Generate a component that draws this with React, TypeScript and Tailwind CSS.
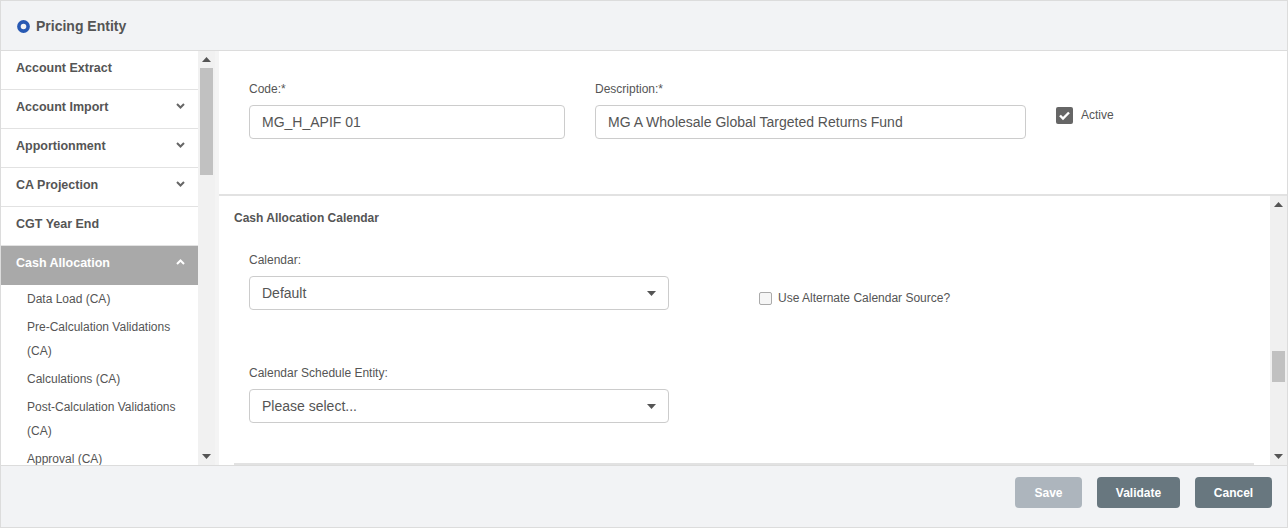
import React from "react";

const Chevron = ({ up = false, color = "#666" }: { up?: boolean; color?: string }) => (
  <svg width="9" height="6" viewBox="0 0 9 6" className="block">
    <path
      d={up ? "M1 5 L4.5 1.5 L8 5" : "M1 1 L4.5 4.5 L8 1"}
      fill="none"
      stroke={color}
      strokeWidth="2"
    />
  </svg>
);

const Caret = ({ up = false, color = "#555" }: { up?: boolean; color?: string }) => (
  <svg width="9" height="5" viewBox="0 0 9 5" className="block">
    <path d={up ? "M0 5 L4.5 0 L9 5 Z" : "M0 0 L9 0 L4.5 5 Z"} fill={color} />
  </svg>
);

const navItems = [
  { label: "Account Extract", chevron: false },
  { label: "Account Import", chevron: true },
  { label: "Apportionment", chevron: true },
  { label: "CA Projection", chevron: true },
  { label: "CGT Year End", chevron: false },
];

const subItems = [
  "Data Load (CA)",
  "Pre-Calculation Validations (CA)",
  "Calculations (CA)",
  "Post-Calculation Validations (CA)",
  "Approval (CA)",
];

export default function App() {
  return (
    <div
      className="w-[1288px] h-[528px] border border-[#dcdcdc] flex flex-col bg-white overflow-hidden"
      style={{ fontFamily: '"Liberation Sans", Arial, sans-serif' }}
    >
      {/* Header */}
      <div className="h-[50px] shrink-0 bg-[#f2f3f5] border-b border-[#dcdcdc] flex items-center pl-[16px] pt-[1px]">
        <svg width="13" height="13" viewBox="0 0 13 13" className="mr-[6px]">
          <circle cx="6.5" cy="6.5" r="4.6" fill="none" stroke="#2859b3" strokeWidth="3.6" />
        </svg>
        <span className="text-[14px] font-bold text-[#555] leading-none">Pricing Entity</span>
      </div>

      {/* Body */}
      <div className="flex flex-1 min-h-0">
        {/* Sidebar */}
        <div className="w-[218px] shrink-0 flex">
          <div className="w-[197px] overflow-hidden flex flex-col">
            {navItems.map((it) => (
              <div
                key={it.label}
                className="h-[39px] shrink-0 border-b border-[#e2e2e2] flex items-start justify-between pl-[15px] pr-[13px] pt-[9px]"
              >
                <span className="text-[12.5px] font-bold text-[#555] leading-[16px]">{it.label}</span>
                {it.chevron && (
                  <span className="pt-[4px]">
                    <Chevron />
                  </span>
                )}
              </div>
            ))}
            <div className="h-[39px] shrink-0 bg-[#a9a9a9] flex items-start justify-between pl-[15px] pr-[13px] pt-[9px]">
              <span className="text-[12.5px] font-bold text-white leading-[16px]">Cash Allocation</span>
              <span className="pt-[4px]">
                <Chevron up color="#fff" />
              </span>
            </div>
            <div className="flex flex-col gap-[4px] pt-[2px] pl-[26px] pr-[4px]">
              {subItems.map((s) => (
                <div key={s} className="text-[12px] text-[#555] leading-[24px]">
                  {s}
                </div>
              ))}
            </div>
          </div>
          <div className="w-[17px] shrink-0 bg-[#f1f1f1] flex flex-col items-center">
            <div className="h-[17px] flex items-center justify-center">
              <Caret up />
            </div>
            <div className="w-[13px] h-[107px] bg-[#c1c1c1]" />
            <div className="flex-1" />
            <div className="h-[17px] flex items-center justify-center">
              <Caret />
            </div>
          </div>
          <div className="w-[4px] shrink-0 bg-[#f4f4f4]" />
        </div>

        {/* Main */}
        <div className="flex-1 flex flex-col min-w-0">
          <div className="h-[145px] shrink-0 border-b-2 border-[#e2e2e2] flex items-start pl-[30px] pt-[31px]">
            <div className="w-[316px] mr-[30px]">
              <div className="text-[12px] text-[#555] leading-[14px]">Code:*</div>
              <div className="mt-[9px] h-[34px] border border-[#ccc] rounded-[4px] flex items-center px-[12px] text-[14px] text-[#555]">
                MG_H_APIF 01
              </div>
            </div>
            <div className="w-[431px] mr-[30px]">
              <div className="text-[12px] text-[#555] leading-[14px]">Description:*</div>
              <div className="mt-[9px] h-[34px] border border-[#ccc] rounded-[4px] flex items-center px-[12px] text-[14px] text-[#555]">
                MG A Wholesale Global Targeted Returns Fund
              </div>
            </div>
            <div className="flex items-center mt-[24px]">
              <svg width="17" height="17" viewBox="0 0 17 17">
                <rect x="0" y="0" width="17" height="17" rx="2" fill="#666" />
                <path d="M4 8.5 L7 11.5 L13 5.5" fill="none" stroke="#fff" strokeWidth="2.4" />
              </svg>
              <span className="ml-[8px] text-[12px] text-[#555]">Active</span>
            </div>
          </div>

          <div className="flex-1 flex min-h-0">
            <div className="flex-1 pl-[15px] pr-[15px] pt-[15px] flex flex-col">
              <div className="text-[12px] font-bold text-[#555] leading-[14px]">Cash Allocation Calendar</div>
              <div className="flex items-start pl-[15px] mt-[28px]">
                <div className="w-[420px]">
                  <div className="text-[12px] text-[#555] leading-[14px]">Calendar:</div>
                  <div className="mt-[9px] h-[34px] border border-[#ccc] rounded-[4px] flex items-center justify-between pl-[12px] pr-[12px] text-[14px] text-[#555]">
                    <span>Default</span>
                    <Caret />
                  </div>
                </div>
                <div className="ml-[90px] mt-[36px] flex items-center">
                  <span className="w-[13px] h-[13px] border border-[#aaa] rounded-[2px] bg-[#f6f6f6]" />
                  <span className="ml-[6px] text-[12px] text-[#555]">Use Alternate Calendar Source?</span>
                </div>
              </div>
              <div className="pl-[15px] mt-[56px] w-[435px]">
                <div className="text-[12px] text-[#555] leading-[14px]">Calendar Schedule Entity:</div>
                <div className="mt-[9px] h-[34px] border border-[#ccc] rounded-[4px] flex items-center justify-between pl-[12px] pr-[12px] text-[14px] text-[#555]">
                  <span>Please select...</span>
                  <Caret />
                </div>
              </div>
              <div className="mt-[40px] h-[2px] bg-[#e2e2e2] mr-[1px]" />
            </div>
            <div className="w-[17px] shrink-0 bg-[#f0f0f0] flex flex-col items-center">
              <div className="h-[17px] flex items-center justify-center">
                <Caret up />
              </div>
              <div className="h-[138px]" />
              <div className="w-[13px] h-[31px] bg-[#c1c1c1]" />
              <div className="flex-1" />
              <div className="h-[17px] flex items-center justify-center">
                <Caret />
              </div>
            </div>
          </div>
        </div>
      </div>

      {/* Footer */}
      <div className="h-[62px] shrink-0 bg-[#f2f3f5] border-t border-[#dcdcdc] flex items-start justify-end gap-[15px] pr-[15px] pt-[11px]">
        <button className="w-[67px] h-[31px] rounded-[4px] bg-[#adb5bd] text-white text-[12px] font-bold">Save</button>
        <button className="w-[83px] h-[31px] rounded-[4px] bg-[#68777f] text-white text-[12px] font-bold">Validate</button>
        <button className="w-[77px] h-[31px] rounded-[4px] bg-[#68777f] text-white text-[12px] font-bold">Cancel</button>
      </div>
    </div>
  );
}
